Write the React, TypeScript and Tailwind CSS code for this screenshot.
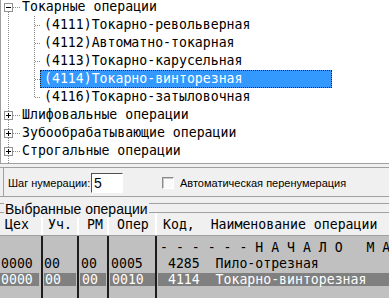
import React from "react";

const mono = "font-['DejaVu_Sans_Mono','Liberation_Mono',monospace]";
const sans = "font-['Liberation_Sans',Arial,sans-serif]";

function ExpandBox({ open }: { open: boolean }) {
  return (
    <span className="relative ml-[3px] w-[9px] h-[9px] shrink-0 border border-[#919191] bg-white">
      <span className="absolute left-[1px] top-[3px] w-[5px] h-px bg-black" />
      {!open && <span className="absolute left-[3px] top-[1px] w-px h-[5px] bg-black" />}
    </span>
  );
}

function RootRow({ label, open }: { label: string; open: boolean }) {
  return (
    <div className="flex items-center h-[18px]">
      <ExpandBox open={open} />
      <span className="ml-[9px] leading-[18px] whitespace-pre">{label}</span>
    </div>
  );
}

function ChildRow({ label, selected }: { label: string; selected?: boolean }) {
  if (selected) {
    return (
      <div className="h-[18px] pl-[39px]">
        <div className="w-[292px] h-[18px] bg-[#3399ff] border border-dotted border-[#222] pl-[3px] leading-[16px] text-white whitespace-pre">
          {label}
        </div>
      </div>
    );
  }
  return <div className="h-[18px] pl-[43px] leading-[18px] whitespace-pre">{label}</div>;
}

function TreeLines() {
  const dot = { stroke: "#8a8a8a", strokeWidth: 1, strokeDasharray: "1 1", shapeRendering: "crispEdges" as const };
  const childY = [25, 43, 61, 79, 97];
  const rootY = [7, 115, 133, 151];
  return (
    <svg className="absolute left-0 top-0" width="60" height="164">
      <line x1="7.5" y1="12" x2="7.5" y2="164" {...dot} />
      {rootY.map((y) => (
        <line key={y} x1="12" y1={y + 0.5} x2="19" y2={y + 0.5} {...dot} />
      ))}
      <line x1="33.5" y1="16" x2="33.5" y2="98" {...dot} />
      {childY.map((y) => (
        <line key={y} x1="34" y1={y + 0.5} x2="40" y2={y + 0.5} {...dot} />
      ))}
    </svg>
  );
}

type Col = { w: string; head: string; headPad: string; pad: string; hl: string; cells: string[] };

const cols: Col[] = [
  { w: "w-[43px]", head: "Цех", headPad: "pl-[5px]", pad: "pl-[1px]", hl: "mr-[2px]", cells: ["", "0000", "0000"] },
  { w: "w-[36px]", head: "Уч.", headPad: "pl-[5px]", pad: "pl-[1px]", hl: "mx-[1px]", cells: ["", "00", "00"] },
  { w: "w-[30px]", head: "РМ", headPad: "pl-[8px]", pad: "pl-[2px]", hl: "mx-[1px]", cells: ["", "00", "00"] },
  { w: "w-[48px]", head: "Опер", headPad: "pl-[8px]", pad: "pl-[2px]", hl: "ml-[1px]", cells: ["", "0005", "0010"] },
];

const last = {
  head: "Код,  Наименование операции",
  cells: ["- - - - - - Н А Ч А Л О   М А Р Ш Р У Т А", " 4285  Пило-отрезная", " 4114  Токарно-винторезная"],
};

export default function App() {
  return (
    <div className={`w-[389px] h-[298px] overflow-hidden bg-[#f0f0f0] flex flex-col text-black ${sans}`}>
      {/* Tree */}
      <div className={`relative h-[164px] shrink-0 bg-white border-l border-b border-[#a0a0a0] overflow-hidden text-[13.2px] ${mono}`}>
        <TreeLines />
        <div className="relative -mt-[2px]">
          <RootRow label="Токарные операции" open />
          <ChildRow label="(4111)Токарно-револьверная" />
          <ChildRow label="(4112)Автоматно-токарная" />
          <ChildRow label="(4113)Токарно-карусельная" />
          <ChildRow label="(4114)Токарно-винторезная" selected />
          <ChildRow label="(4116)Токарно-затыловочная" />
          <RootRow label="Шлифовальные операции" open={false} />
          <RootRow label="Зубообрабатывающие операции" open={false} />
          <RootRow label="Строгальные операции" open={false} />
        </div>
      </div>

      <div className="h-[3px] shrink-0" />

      {/* Numbering panel */}
      <div className="h-[30px] shrink-0 border-t border-b border-[#a0a0a0]">
        <div className="ml-[3px] h-full border-l border-[#a0a0a0] flex items-center pl-[4px] pt-[2px] text-[11px]">
          <span className="w-[83px] whitespace-pre">Шаг нумерации:</span>
          <div className="w-[32px] h-[20px] border border-t-[#505050] border-l-[#505050] border-b-white border-r-white bg-white pl-[2px] text-[14px] leading-[18px]">
            5
          </div>
          <span className="ml-[39px] w-[12px] h-[12px] border border-t-[#8a8a8a] border-l-[#8a8a8a] border-b-white border-r-white bg-[#fafafa] shadow-[inset_1px_1px_0_#c8c8c8]" />
          <span className="ml-[6px] whitespace-pre">Автоматическая перенумерация</span>
        </div>
      </div>

      {/* Group title */}
      <div className="relative h-[15px] shrink-0">
        <div className="absolute left-0 right-0 top-[6px] h-px bg-[#a0a0a0]" />
        <span className="relative ml-[4px] px-[1px] bg-[#f0f0f0] text-[14px] leading-[15px] whitespace-pre">
          Выбранные операции
        </span>
      </div>

      {/* Grid header */}
      <div className={`h-[24px] shrink-0 flex border-t border-b border-[#a0a0a0] text-[13.2px] ${mono}`}>
        {cols.map((c) => (
          <div key={c.head} className={`${c.w} shrink-0 border-r-2 border-white ${c.headPad} pt-[3px] leading-[18px] whitespace-pre`}>
            {c.head}
          </div>
        ))}
        <div className="flex-1 pl-[6px] pt-[3px] leading-[18px] whitespace-pre">{last.head}</div>
      </div>

      {/* Grid data */}
      <div className={`flex-1 flex bg-[#c0c0c0] text-[13.2px] ${mono}`}>
        {cols.map((c) => (
          <div key={c.head} className={`${c.w} shrink-0 border-r-2 border-[#1c1c1c] pt-[4px]`}>
            {c.cells.map((v, i) =>
              i === 2 ? (
                <div key={i} className="h-[16px]">
                  <div className={`mt-[1px] h-[13px] ${c.hl} bg-[#808080] text-white leading-[13px] ${c.pad} whitespace-pre`}>
                    {v}
                  </div>
                </div>
              ) : (
                <div key={i} className={`h-[16px] leading-[16px] ${c.pad} whitespace-pre`}>
                  {v}
                </div>
              )
            )}
          </div>
        ))}
        <div className="flex-1 min-w-0 pt-[4px] overflow-hidden">
          {last.cells.map((v, i) =>
            i === 2 ? (
              <div key={i} className="h-[16px]">
                <div className="mt-[1px] ml-[1px] h-[13px] bg-[#808080] text-white leading-[13px] pl-[2px] whitespace-pre">
                  {v}
                </div>
              </div>
            ) : (
              <div key={i} className="h-[16px] leading-[16px] pl-[3px] whitespace-pre">
                {v}
              </div>
            )
          )}
        </div>
      </div>
    </div>
  );
}
